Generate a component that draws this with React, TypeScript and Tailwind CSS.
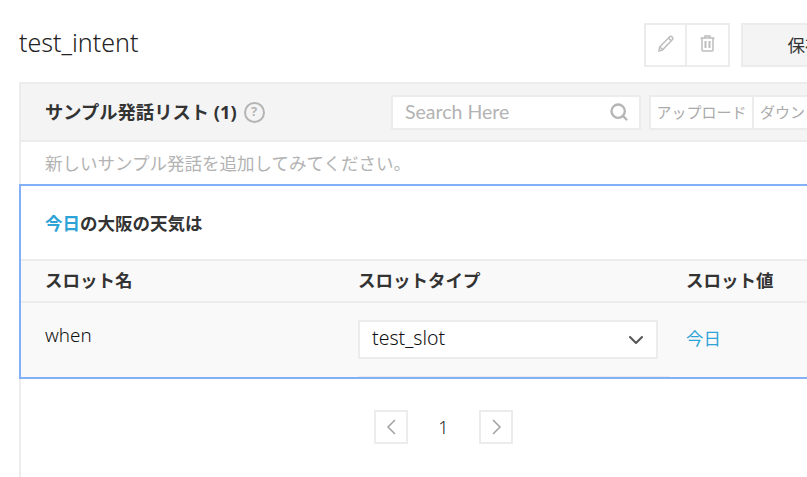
import { ChevronDown, Search } from "lucide-react";

const font = "font-['Noto_Sans','Noto_Sans_CJK_JP',sans-serif]";

function Pencil() {
    return (
        <svg width="16" height="17" viewBox="0 0 16 17" fill="none" stroke="#bdbdbd" strokeWidth="1.5">
            <path d="M1 16 L1.6 12 L11.5 2 Q12.8 0.8 14.2 2 Q15.4 3.4 14.2 4.8 L4.4 15 Z" />
            <path d="M2 12 L5 15" />
            <path d="M10.5 3 L13 5.6" />
        </svg>
    );
}

function Trash() {
    return (
        <svg width="15" height="17" viewBox="0 0 15 17" fill="none" stroke="#bdbdbd" strokeWidth="1.5">
            <path d="M0.5 3 H14.5" />
            <path d="M5 3 V1 H10 V3" />
            <path d="M2 3 V15 Q2 16 3 16 H12 Q13 16 13 15 V3" />
            <path d="M5.5 6 V13 M9.5 6 V13" strokeWidth="2" />
        </svg>
    );
}

function Arrow({ d }: { d: string }) {
    return (
        <svg width="9" height="16" viewBox="0 0 9 16" fill="none" stroke="#a0a0a0" strokeWidth="1.5">
            <path d={d} />
        </svg>
    );
}

export default function App() {
    return (
        <div className={`${font} w-[807px] h-[477px] overflow-hidden bg-white text-[#333]`}>
            <div className="w-[1000px]">
                {/* Cabecera */}
                <div className="h-[82px] pl-[19px] flex items-start">
                    <h1 className="w-[625px] pt-[24px] text-[25px] leading-[36px] font-light text-[#222]">test_intent</h1>
                    <div className="mt-[23px] flex h-[44px] w-[86px] border-2 border-[#ececec] box-border">
                        <button className="w-[41px] flex items-center justify-center border-r-2 border-[#ececec] pb-[3px]"><Pencil /></button>
                        <button className="flex-1 flex items-center justify-center pb-[3px]"><Trash /></button>
                    </div>
                    <button className="mt-[23px] ml-[11px] h-[44px] w-[128px] border-2 border-[#ececec] bg-[#f4f4f4] text-[17.5px] text-[#333]">保存</button>
                </div>

                {/* Panel */}
                <div className="ml-[19px] h-[395px] border-l-2 border-[#ececec]">
                    <div className="h-[60px] -ml-[2px] flex items-center border-y-2 border-l-2 border-[#ececec] bg-[#f4f4f4]">
                        <div className="w-[370px] pl-[24px] flex items-center gap-[7px]">
                            <span className="text-[18.3px] font-bold text-[#333]">サンプル発話リスト (1)</span>
                            <span className="w-[21px] h-[21px] rounded-full border-[2.5px] border-[#b5b5b5] flex items-center justify-center text-[13px] font-bold text-[#b5b5b5]">?</span>
                        </div>
                        <div className="w-[250px] h-[35px] flex items-center justify-between pl-[12px] pr-[10px] bg-white border-2 border-[#ececec]">
                            <span className="font-['Lato',sans-serif] text-[19.5px] text-[#b3b3b3]">Search Here</span>
                            <Search size={20} strokeWidth={2.8} color="#b5b5b5" />
                        </div>
                        <div className="ml-[8px] h-[35px] flex bg-white border-2 border-[#ececec] text-[15px] text-[#aaa]">
                            <span className="w-[103px] flex items-center justify-center border-r-2 border-[#ececec]">アップロード</span>
                            <span className="w-[102px] pl-[6px] flex items-center">ダウンロード</span>
                        </div>
                    </div>
                    <div className="h-[42px] pl-[24px] flex items-center text-[17.5px] text-[#b3b3b3]">新しいサンプル発話を追加してみてください。</div>

                    {/* Tarjeta seleccionada */}
                    <div className="-ml-[2px] h-[195px] border-2 border-[#82b1f9] flex flex-col">
                        <div className="h-[73px] pl-[24px] pt-[1px] flex items-center text-[17.5px] font-bold text-[#333]">
                            <span className="text-[#2ea3d5]">今日</span>の大阪の天気は
                        </div>
                        <div className="flex-1 bg-[#f9f9f9]">
                            <div className="h-[44px] pb-[2px] flex items-center border-y-2 border-[#ececec] text-[17.5px] font-bold text-[#333]">
                                <span className="w-[337px] pl-[24px]">スロット名</span>
                                <span className="w-[328px]">スロットタイプ</span>
                                <span>スロット値</span>
                            </div>
                            <div className="flex items-start">
                                <span className="w-[337px] pl-[24px] pt-[20px] text-[18.8px] leading-[24px] font-light text-[#111]">when</span>
                                <div className="w-[328px] pt-[17px]">
                                    <div className="w-[300px] h-[39px] flex items-center justify-between pl-[12px] pr-[8px] bg-white border-2 border-[#ececec] text-[19.5px] font-light text-[#111]">
                                        <span className="pb-[3px]">test_slot</span>
                                        <ChevronDown size={24} strokeWidth={2} color="#555" />
                                    </div>
                                    <div className="mt-[17px] w-[312px] h-px bg-[#ececec]"></div>
                                </div>
                                <span className="pt-[23px] text-[17.5px] leading-[24px] text-[#2ea3d5]">今日</span>
                            </div>
                        </div>
                    </div>

                    {/* Paginación */}
                    <div className="pt-[31px] pl-[353px] flex items-center">
                        <button className="w-[34px] h-[34px] flex items-center justify-center border-2 border-[#ececec]"><Arrow d="M8 1 L1 8 L8 15" /></button>
                        <span className="w-[71px] text-center text-[18px] font-light text-[#222]">1</span>
                        <button className="w-[34px] h-[34px] flex items-center justify-center border-2 border-[#ececec]"><Arrow d="M1 1 L8 8 L1 15" /></button>
                    </div>
                </div>
            </div>
        </div>
    );
}
